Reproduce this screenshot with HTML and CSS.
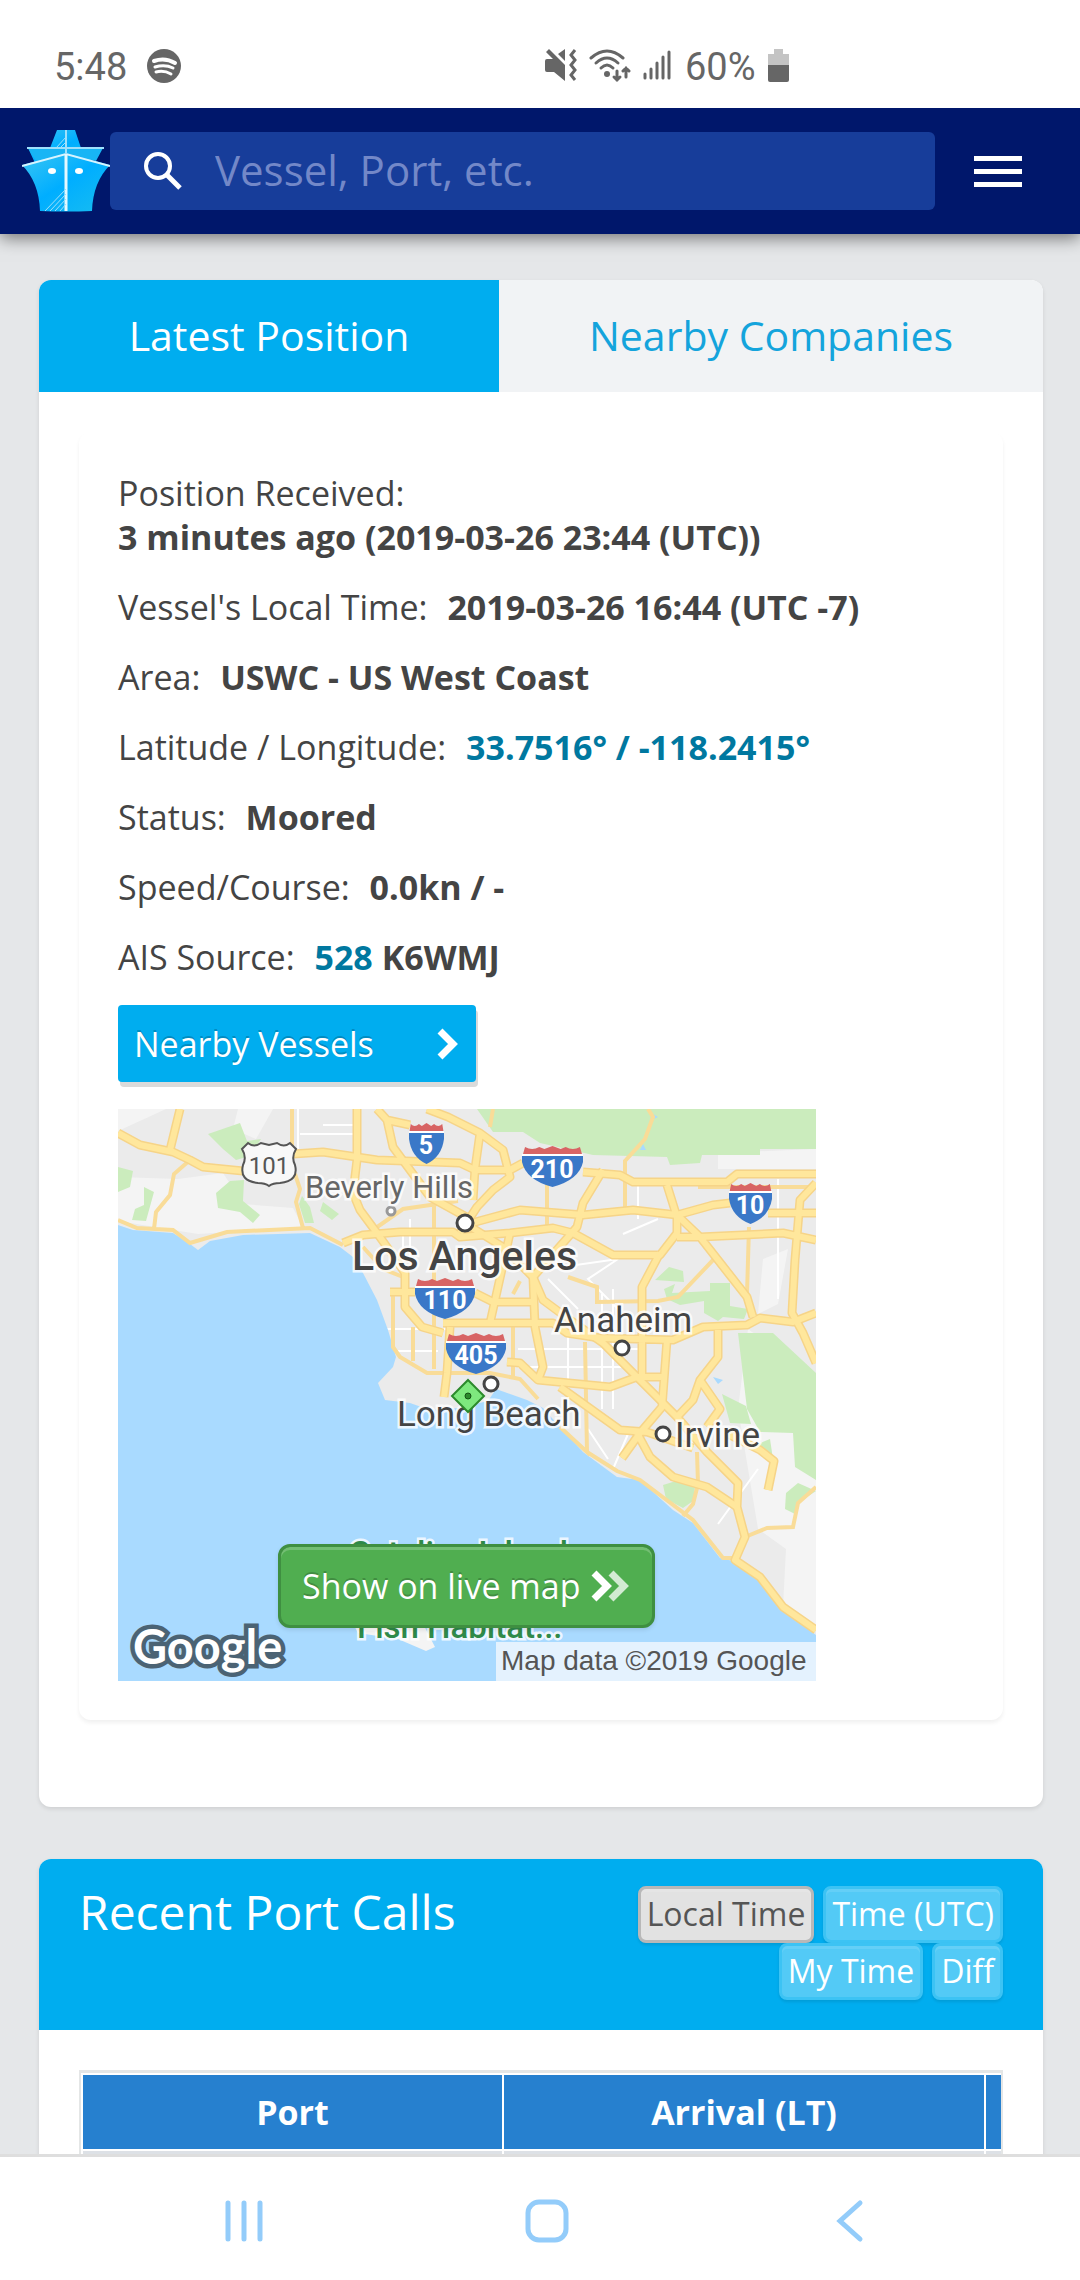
FILE: index.html
```html
<!DOCTYPE html>
<html lang="en">
<head>
    <meta charset="UTF-8">
    <meta name="viewport" content="width=device-width, initial-scale=1.0">
    <title>Vessel - Latest Position</title>
    <link rel="stylesheet" href="styles.css">
</head>
<body>
    <div class="statusbar">
        <div class="status-left">
            <span>5:48</span>
            <svg width="34" height="34" viewBox="0 0 34 34">
                <circle cx="17" cy="17" r="17" fill="#666"/>
                <g fill="none" stroke="#fff" stroke-linecap="round">
                    <path d="M7 12Q18 8 28 14" stroke-width="4"/>
                    <path d="M8 18Q18 15 26 19" stroke-width="3"/>
                    <path d="M9 23Q17 21 24 25" stroke-width="3"/>
                </g>
            </svg>
        </div>
        <div class="status-right">
            <svg width="32" height="32" viewBox="0 0 32 32">
                <path d="M0 12q0-2 2-2h6L1 3l3-3 16 16v16L9 23H2q-2 0-2-2z" fill="#666"/>
                <path d="M13 5l7-5v12z" fill="#666"/>
                <path d="M30 1l-4 5 4 5-4 5 4 5-4 5 4 5" fill="none" stroke="#666" stroke-width="3"/>
            </svg>
            <svg width="42" height="34" viewBox="0 0 42 34">
                <g fill="none" stroke="#666" stroke-width="3" stroke-linecap="round">
                    <path d="M2 9Q18-5 34 9"/>
                    <path d="M7 14Q18 4 29 14"/>
                    <path d="M12 19Q18 13 24 19"/>
                    <path d="M28 22v9m-3-3l3 3 3-3"/>
                    <path d="M37 28v-9m-3 3l3-3 3 3"/>
                </g>
                <circle cx="18" cy="25" r="3" fill="#666"/>
            </svg>
            <svg width="30" height="32" viewBox="0 0 30 32">
                <path d="M2 29v-4M8 29V20M14 29V14M20 29V8M26 29V3" stroke="#666" stroke-width="3" stroke-linecap="round"/>
            </svg>
            <span>60%</span>
            <svg width="22" height="33" viewBox="0 0 22 33">
                <path d="M6 0h9v5h6v12H0V5h6z" fill="#c4c4c4"/>
                <path d="M0 16h21v15q0 2-2 2H2q-2 0-2-2z" fill="#666"/>
            </svg>
        </div>
    </div>

    <header class="header">
        <a href="#" class="logo" aria-label="Home">
            <svg width="88" height="82" viewBox="0 0 88 82">
                <defs>
                    <linearGradient id="hull" x1="0" y1="0" x2="1" y2="1">
                        <stop offset="0" stop-color="#3cc6f2"/>
                        <stop offset=".5" stop-color="#00aeff"/>
                        <stop offset="1" stop-color="#18bdf0"/>
                    </linearGradient>
                </defs>
                <path d="M35 0h18l6 18h17L69 31 45 24 13 33 6 18h22z" fill="url(#hull)"/>
                <path d="M6 18h75L74 31 44 23 14 31z" fill="#18b5f5"/>
                <path d="M5 18h77" stroke="#9fe0fb" stroke-width="2"/>
                <path d="M0 35l44-12 44 12Q71 52 70 81q-26 1-52 0Q17 52 0 35z" fill="url(#hull)"/>
                <path d="M0 36l44-12 44 12" fill="none" stroke="#d6f4ff" stroke-width="2"/>
                <path d="M44 0v24" stroke="#9fe0fb" stroke-width="2"/>
                <path d="M44 24v57" stroke="#e4f8ff" stroke-width="3"/>
                <path d="M23 81l21-22M28 81l16-17M33 81l11-12M38 81l6-7M34 18L44 7M38 18l6-6" stroke="#9fe0fb" stroke-width="1"/>
                <ellipse cx="30" cy="41" rx="4" ry="3" fill="#fff"/>
                <ellipse cx="57" cy="41" rx="4" ry="3" fill="#fff"/>
            </svg>
        </a>
        <label class="search">
            <svg width="40" height="40" viewBox="0 0 40 40" fill="none" stroke="#fff">
                <circle cx="15" cy="15" r="12" stroke-width="4"/>
                <path d="M24 24l13 13" stroke-width="5"/>
            </svg>
            <input type="text" placeholder="Vessel, Port, etc." aria-label="Search">
        </label>
        <button class="menu-btn" aria-label="Menu">
            <span></span><span></span><span></span>
        </button>
    </header>

    <main class="content">
        <section class="card">
            <div class="tabs">
                <button class="tab active">Latest Position</button>
                <button class="tab">Nearby Companies</button>
            </div>
            <div class="card-body">
                <div class="panel">
                    <p>Position Received:<br><strong>3 minutes ago (2019-03-26 23:44 (UTC))</strong></p>
                    <p>Vessel's Local Time: <strong>2019-03-26 16:44 (UTC -7)</strong></p>
                    <p>Area: <strong>USWC - US West Coast</strong></p>
                    <p>Latitude / Longitude: <strong><a href="#">33.7516° / -118.2415°</a></strong></p>
                    <p>Status: <strong>Moored</strong></p>
                    <p>Speed/Course: <strong>0.0kn / -</strong></p>
                    <p>AIS Source: <strong><a href="#">528</a> K6WMJ</strong></p>
                    <a href="#" class="btn-nearby">
                        Nearby Vessels
                        <svg width="22" height="32" viewBox="0 0 22 32"><path d="M4 3l13 13L4 29" fill="none" stroke="#fff" stroke-width="7"/></svg>
                    </a>
                    <div class="map">
                        <svg viewBox="0 0 698 572">
                            <defs>
                                <symbol id="shield" viewBox="0 0 60 41" preserveAspectRatio="none">
                                    <path d="M0 10h60v6Q56 34 30 41 4 34 0 16z" fill="#3a78c8"/>
                                    <path d="M1 8L3 1q7 4 14 0l5 2 8-3 8 3 5-2q7 4 14 0l2 7z" fill="#d86464"/>
                                    <path d="M0 9h60" stroke="#fff" stroke-width="2"/>
                                </symbol>
                                <g id="freeways">
                                    <path d="M0 24L22 36 55 43 72 51 85 58 125 62M175 45L205 43 259 51 342 54 357 61H392L405 54M465 63L502 66 515 73H609L619 65H698"/>
                                    <path d="M62 0L52 41M239 0V51L235 84 242 101 259 124 269 138 287 164V198L304 218 325 224"/>
                                    <path d="M259 0L269 11 275 38 292 61 312 88 352 110M269 11L292 16M309 0L330 8 362 24 385 41 392 68 375 81 359 98 342 124M362 24L357 60 355 91"/>
                                    <path d="M225 134L245 126 282 123H335L342 128 392 124 435 119 455 124 495 146H542L559 124V108L549 76"/>
                                    <path d="M350 115L402 101 465 106 515 101 559 106 595 96 612 94M650 104H698M485 61L465 94 459 118 415 168"/>
                                    <path d="M559 106L582 128 629 188 635 208M559 128H582L665 124 698 131M698 74L682 91 677 151 674 204 685 224 698 254"/>
                                    <path d="M542 144L524 178V268M325 214H435L449 224 482 229 555 231 585 218 629 216 642 209 675 213 698 204"/>
                                    <path d="M392 124L372 214M348 115L385 138 415 168 425 191 452 211 485 234 519 268 559 308 589 343 620 374 619 398 627 428 617 451 642 468 665 498 698 521"/>
                                    <path d="M415 168L417 218 425 258 420 271M357 184L375 193H415M389 253L402 254 420 271 492 278 519 268H545"/>
                                    <path d="M442 278L502 321 529 323 575 339M549 231L544 298 522 324 504 349M519 324L532 348 555 368 589 378 619 398"/>
                                    <path d="M600 221V248L582 271 602 300 589 318M582 271L575 291 559 308M610 325L642 341 656 352 650 381"/>
                                    <path d="M272 183H297M332 218L329 264 326 288"/>
                                </g>
                                <g id="roads">
                                    <path d="M0 111L19 119 55 121 72 134 109 123 192 119 225 136M72 51L56 65 52 86 38 103 36 120M174 0V44M177 65L182 80 178 93 185 119"/>
                                    <path d="M275 183V238L282 248 309 264 340 264 372 264 402 270 420 290M295 218V252M316 90V260M242 130L285 100 340 92M245 138L265 160 285 168"/>
                                    <path d="M375 0L372 18M530 0L535 8 527 30 507 52V98M429 74V118M580 78H690M631 118L629 185M596 150L560 188 540 192 479 193V178L450 168M395 185L402 172"/>
                                    <path d="M395 215V270M467 233L469 343 442 318M469 343L499 362 522 371 575 411 605 449H617M698 378L680 394 675 418 649 419 627 428M579 343L580 375 575 395 565 407"/>
                                </g>
                            </defs>
                            <rect width="698" height="572" fill="#ebebeb"/>
                            <g fill="#f4f4f4">
                                <path d="M0 68L60 70 105 64 125 95 175 99 185 118 80 125 0 112zM0 0H48L0 22zM120 0H155L138 30 115 20z"/>
                                <path d="M600 44L698 40V60H600zM630 220L698 270V520L665 498 668 440 640 420 620 300zM645 150L670 140 660 195 640 205z"/>
                            </g>
                            <g fill="#cbecbd">
                                <path d="M359 0L375 23H405L422 34 475 46 549 48 552 56 582 54 584 46 642 46V40H698V0z"/>
                                <path d="M620 224H655L698 264V371L677 358 675 324 642 323 629 300z"/>
                                <path d="M90 25L122 14 129 32 143 30 132 47 118 51 105 40zM98 84L112 72 126 71 125 92 142 106 135 114 122 103 100 99zM0 58L15 62 12 78 0 83zM26 78L36 83 28 112 14 111 17 100 26 96zM184 87L192 98 196 114H187L181 95zM205 93L221 105 214 111 202 102z"/>
                                <path d="M537 171L551 158 565 162 566 173zM546 180L557 175 554 184 592 182V174H612V197L630 200 626 210 605 208 600 212 586 204V192L562 196 549 190z"/>
                                <path d="M545 376L558 372 577 378 575 392 565 399 548 390zM604 285L628 297 633 315 612 314zM668 384L680 374 698 382 680 394 677 405 667 400zM640 335L652 330 655 350 644 345z"/>
                            </g>
                            <g fill="none" stroke="#fff" stroke-width="2">
                                <path d="M180 0V40M205 16H240M182 25H235M285 122V200M292 110V150M260 220H330M280 242H320M450 220V300M484 185V300M495 180V300M400 240H520M400 258H510M430 160L500 150 470 170 500 200M520 76V110M505 125L540 110M420 190L450 210M600 415L640 360M470 320L490 350M510 325L495 360M430 170L460 200M660 70V190"/>
                            </g>
                            <path d="M0 116L15 121 55 124 72 135 80 141 92 132 125 126 192 124 222 138 235 148 245 164 259 191 270 221 278 248 275 258 260 274 267 291 292 294 312 301 340 299 370 292 378 280 409 291 425 299 442 318 465 343 499 368 522 371 555 401 575 414 602 449 619 453 642 468 662 498 698 526V572H0z" fill="#a9daff"/>
                            <path d="M230 505L300 505 317 538 308 542 280 530 240 524z" fill="#f4f4f4"/>
                            <path d="M595 268L605 271 600 275zM535 5L540 8 536 10zM525 35L528 41 522 41z" fill="#a9daff"/>
                            <use href="#roads" class="road-thin"/>
                            <use href="#freeways" class="road-edge"/>
                            <use href="#freeways" class="road-fill"/>

                            <g class="shields">
                                <use href="#shield" x="291" y="14" width="35" height="41"/>
                                <use href="#shield" x="404" y="37" width="61" height="41"/>
                                <use href="#shield" x="611" y="74" width="43" height="41"/>
                                <use href="#shield" x="297" y="169" width="60" height="41"/>
                                <use href="#shield" x="328" y="224" width="60" height="41"/>
                                <text x="308" y="45">5</text>
                                <text x="434" y="69">210</text>
                                <text x="632" y="105">10</text>
                                <text x="327" y="200">110</text>
                                <text x="358" y="255">405</text>
                            </g>
                            <path d="M124 40l6-6q6 5 13 0l8 2 8-2q7 5 13 0l6 6q-5 8-1 16 4 16-15 18-7 0-11 3-4-3-11-3-19-2-15-18 4-8-1-16z" fill="#f8f8f8" stroke="#555" stroke-width="2"/>
                            <text x="151" y="65" class="us-route">101</text>

                            <g fill="#fff" stroke="#444" stroke-width="3">
                                <circle cx="347" cy="114" r="8"/>
                                <circle cx="504" cy="239" r="7"/>
                                <circle cx="373" cy="275" r="7"/>
                                <circle cx="545" cy="325" r="7"/>
                                <circle cx="273" cy="102" r="4" stroke="#999"/>
                            </g>
                            <g class="places">
                                <text x="187" y="89" class="minor">Beverly Hills</text>
                                <text x="234" y="161" class="major">Los Angeles</text>
                                <text x="436" y="223">Anaheim</text>
                                <text x="279" y="317">Long Beach</text>
                                <text x="557" y="338">Irvine</text>
                                <text x="231" y="456" class="park">Catalina Island</text>
                                <text x="239" y="529" class="park">Fish Habitat...</text>
                            </g>
                            <path d="M350 271l16 16-16 16-16-16z" fill="#7ee87e" stroke="#2c8a2c" stroke-width="2"/>
                            <circle cx="350" cy="287" r="3" fill="#2c8a2c" stroke="#145214"/>
                            <text x="15" y="555" class="google">Google</text>
                            <rect x="378" y="533" width="320" height="39" fill="#e4f2fe"/>
                            <text x="383" y="561" class="copyright">Map data ©2019 Google</text>
                        </svg>
                        <a href="#" class="btn-live">
                            Show on live map
                            <svg width="40" height="32" viewBox="0 0 40 32" fill="none" stroke="#fff" stroke-width="7">
                                <path d="M20 3l13 13-13 13" opacity=".75"/>
                                <path d="M3 3l13 13L3 29"/>
                            </svg>
                        </a>
                    </div>
                </div>
            </div>
        </section>

        <section class="card">
            <div class="card-header">
                <h2>Recent Port Calls</h2>
                <div class="time-buttons">
                    <button class="time-btn selected">Local Time</button>
                    <button class="time-btn">Time (UTC)</button>
                    <button class="time-btn">My Time</button>
                    <button class="time-btn">Diff</button>
                </div>
            </div>
            <div class="card-body">
                <div class="table-wrap">
                    <table>
                        <thead>
                            <tr><th class="col-port">Port</th><th class="col-arrival">Arrival (LT)</th><th></th></tr>
                        </thead>
                        <tbody>
                            <tr><td></td><td></td><td></td></tr>
                        </tbody>
                    </table>
                </div>
            </div>
        </section>
    </main>

    <nav class="navbar">
        <button aria-label="Recents">
            <svg width="44" height="44" viewBox="0 0 44 44"><path d="M6 4v36M22 4v36M38 4v36" stroke="#93ccfa" stroke-width="5" stroke-linecap="round"/></svg>
        </button>
        <button aria-label="Home">
            <svg width="44" height="44" viewBox="0 0 44 44"><rect x="3" y="3" width="38" height="38" rx="11" fill="none" stroke="#93ccfa" stroke-width="5"/></svg>
        </button>
        <button aria-label="Back">
            <svg width="44" height="44" viewBox="0 0 44 44"><path d="M32 4L12 22l20 18" fill="none" stroke="#93ccfa" stroke-width="5" stroke-linecap="round"/></svg>
        </button>
    </nav>
</body>
</html>
```

FILE: styles.css
```css
* {
    box-sizing: border-box;
}
body {
    margin: 0;
    height: 100vh;
    display: flex;
    flex-direction: column;
    overflow: hidden;
    background-color: #e5e7e9;
    color: #444;
    font-family: 'Open Sans', sans-serif;
    font-size: 34px;
    line-height: 44px;
}
button {
    border: 0;
    padding: 0;
    background: none;
    font-family: inherit;
}
svg {
    display: block;
    flex-shrink: 0;
}

/* Status bar */
.statusbar {
    display: flex;
    flex-shrink: 0;
    height: 108px;
    padding: 45px 54px 0;
    background-color: #fff;
    color: #666;
    font-family: Roboto, sans-serif;
    font-size: 38px;
    position: relative;
    z-index: 2; /* keeps the header shadow off the bar */
}
.status-left,
.status-right {
    display: flex;
    align-items: flex-start;
    gap: 12px;
}
.status-left {
    width: 491px;
    gap: 20px;
}
.statusbar svg {
    margin-top: 4px;
}

/* Header */
.header {
    display: flex;
    align-items: center;
    flex-shrink: 0;
    height: 126px;
    padding: 0 58px 0 22px;
    background-color: #00176b;
    box-shadow: 0 4px 16px rgba(0, 0, 0, 0.5);
    position: relative;
    z-index: 1;
}
.search {
    display: flex;
    align-items: center;
    flex: 1;
    gap: 32px;
    height: 78px;
    padding-left: 33px;
    border-radius: 6px;
    background-color: #173d9a;
}
.search input {
    flex: 1;
    min-width: 0;
    border: 0;
    padding: 0 0 4px;
    outline: none;
    background: none;
    color: #fff;
    font-family: inherit;
    font-size: 42px;
}
.search input::placeholder {
    color: #7388c8;
}
.menu-btn {
    display: flex;
    flex-direction: column;
    gap: 8px;
    width: 48px;
    margin-left: 39px;
}
.menu-btn span {
    height: 5px;
    background-color: #fff;
}

/* Cards */
.content {
    flex: 1;
    min-height: 0;
    overflow: hidden;
    padding: 46px 37px 0 39px;
}
.card {
    margin-bottom: 52px;
    border-radius: 12px;
    background-color: #fff;
    box-shadow: 0 2px 4px rgba(0, 0, 0, 0.1);
    overflow: hidden;
}
.tabs {
    display: flex;
    background-color: #f1f3f5;
}
.tab {
    flex: 1 1 auto;
    height: 112px;
    padding-bottom: 2px;
    color: #14a4dc;
    font-size: 41px;
}
.tab.active {
    background-color: #00adef;
    color: #fff;
    flex: 0 0 460px;
}
.card-body {
    padding: 40px;
}
.panel {
    margin-bottom: 47px;
    padding: 39px;
    border-radius: 12px;
    box-shadow: 0 3px 4px rgba(0, 0, 0, 0.06);
}
.panel p {
    margin: 0 0 26px;
}
.panel strong {
    margin-left: 11px;
}
.panel br + strong {
    margin-left: 0;
}
.panel p a {
    color: #0078a0;
    text-decoration: none;
}
.btn-nearby {
    display: flex;
    align-items: center;
    justify-content: space-between;
    width: 358px;
    height: 77px;
    padding: 0 18px 0 16px;
    border-radius: 4px;
    background-color: #00adef;
    box-shadow: 2px 5px 0 #dadada;
    color: #fff;
    text-decoration: none;
    text-shadow: 0 -2px 0 rgba(0, 0, 0, 0.2);
}

/* Map */
.map {
    position: relative;
    width: 698px;
    max-width: 100%;
    margin-top: 27px;
}
.road-thin {
    fill: none;
    stroke: #f9dc98;
    stroke-width: 4;
}
.road-edge {
    fill: none;
    stroke: #f6d488;
    stroke-width: 9;
    stroke-linejoin: round;
}
.road-fill {
    fill: none;
    stroke: #ffe79c;
    stroke-width: 6;
    stroke-linejoin: round;
}
.map text {
    font-family: Roboto, sans-serif;
}
.shields text {
    fill: #fff;
    font-size: 25px;
    font-weight: 700;
    text-anchor: middle;
}
.map .us-route {
    fill: #555;
    font-size: 24px;
    text-anchor: middle;
}
.places text {
    fill: #444;
    font-size: 35px;
    paint-order: stroke;
    stroke: rgba(255, 255, 255, 0.8);
    stroke-width: 5px;
}
.places .minor {
    fill: #666;
    font-size: 31px;
}
.places .major {
    font-size: 41px;
    font-weight: 500;
}
.places .park {
    fill: #2f8a4a;
    font-size: 33px;
    font-weight: 500;
}
.map .google {
    font-family: Lato, sans-serif;
    font-size: 47px;
    font-weight: 700;
    fill: #fff;
    paint-order: stroke;
    stroke: #4b6374;
    stroke-width: 9px;
}
.map .copyright {
    font-family: 'Liberation Sans', sans-serif;
    font-size: 28px;
    fill: #555;
}
.btn-live {
    position: absolute;
    left: 160px;
    bottom: 53px;
    display: flex;
    align-items: center;
    gap: 10px;
    height: 84px;
    padding: 0 21px;
    border: 3px solid #3f8f41;
    border-radius: 12px;
    background-color: #50ae50;
    box-shadow: inset 0 3px 0 rgba(255, 255, 255, 0.2), 0 2px 4px rgba(0, 0, 0, 0.1);
    color: #fff;
    text-decoration: none;
    text-shadow: 0 -2px 0 rgba(0, 0, 0, 0.2);
    white-space: nowrap;
}

/* Port calls */
.card-header {
    display: flex;
    justify-content: space-between;
    padding: 27px 40px 30px;
    background-color: #00adef;
    color: #fff;
}
.card-header h2 {
    margin: 0;
    font-size: 48px;
    font-weight: 400;
    line-height: 52px;
}
.time-buttons {
    display: flex;
    flex-wrap: wrap;
    justify-content: flex-end;
    column-gap: 9px;
    width: 400px;
}
.time-btn {
    height: 57px;
    padding: 0 6px 2px;
    border: 3px solid #3cc3f4;
    border-radius: 8px;
    background-color: #53caf6;
    box-shadow: inset 0 3px 0 rgba(255, 255, 255, 0.1), 0 2px 3px rgba(0, 0, 0, 0.1);
    color: #fff;
    font-size: 32px;
}
.time-btn.selected {
    border-color: #b8b8b8;
    background-color: #e2e2e2;
    color: #555;
}
.table-wrap {
    overflow: hidden;
    border: 2px solid #e4e6e6;
    border-top-width: 3px;
}
table {
    width: 1400px;
    table-layout: fixed;
    border-spacing: 2px;
}
th {
    height: 74px;
    padding: 0;
    background-color: #2680cf;
    color: #fff;
}
td {
    height: 74px;
    background-color: #dde1e6;
}
.col-port {
    width: 419px;
}
.col-arrival {
    width: 480px;
}

/* Navigation bar */
.navbar {
    display: flex;
    justify-content: space-around;
    align-items: flex-start;
    flex-shrink: 0;
    height: 126px;
    padding: 42px 79px 0 92px;
    border-top: 3px solid #dedede;
    background-color: #fff;
}
```
